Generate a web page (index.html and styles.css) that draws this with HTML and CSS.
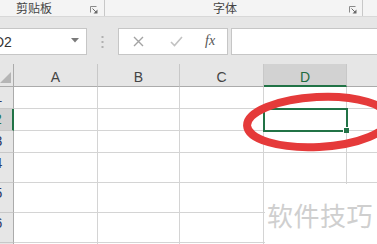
FILE: index.html
```html
<!DOCTYPE html>
<html lang="zh-CN">
<head>
<meta charset="utf-8">
<title>Sheet</title>
<link rel="stylesheet" href="styles.css">
</head>
<body>
<div class="page">
  <div class="ribbon">
    <div class="group g1">
      <span class="label">剪贴板</span>
      <svg class="launcher" width="8" height="8" viewBox="0 0 8 8"><path d="M0.5 6.5V0.5H6.5" fill="none" stroke="#8a8a8a" stroke-width="1"/><path d="M2.5 2.5L6 6" stroke="#6a6a6a" stroke-width="1"/><path d="M7.5 3.5V7.5H3.5Z" fill="#6a6a6a"/></svg>
    </div>
    <div class="group g2">
      <span class="label">字体</span>
      <svg class="launcher" width="8" height="8" viewBox="0 0 8 8"><path d="M0.5 6.5V0.5H6.5" fill="none" stroke="#8a8a8a" stroke-width="1"/><path d="M2.5 2.5L6 6" stroke="#6a6a6a" stroke-width="1"/><path d="M7.5 3.5V7.5H3.5Z" fill="#6a6a6a"/></svg>
    </div>
  </div>

  <div class="fbar">
    <div class="namebox">
      <span class="ref">D2</span>
      <svg class="caret" width="8" height="5" viewBox="0 0 8 5"><path d="M0 0H8L4 4.5Z" fill="#7a7a7a"/></svg>
    </div>
    <div class="grip">
      <svg width="3" height="13" viewBox="0 0 3 13"><rect x="0.5" y="0" width="2" height="2" fill="#b0b0b0"/><rect x="0.5" y="5" width="2" height="2" fill="#b0b0b0"/><rect x="0.5" y="10" width="2" height="2" fill="#b0b0b0"/></svg>
    </div>
    <div class="fbtns">
      <svg class="btn-x" width="11" height="11" viewBox="0 0 11 11"><path d="M1 1L10 10M10 1L1 10" stroke="#a3a3a3" stroke-width="1.4"/></svg>
      <svg class="btn-ok" width="13" height="11" viewBox="0 0 13 11"><path d="M1 6L4.5 9.5L12 1" fill="none" stroke="#c2c2c2" stroke-width="1.6"/></svg>
      <span class="fx">fx</span>
    </div>
    <div class="finput"></div>
  </div>

  <div class="sheet">
    <div class="corner"><svg width="11" height="11" viewBox="0 0 11 11"><path d="M11 0V11H0Z" fill="#b5b5b5"/></svg></div>
    <div class="ch">A</div>
    <div class="ch">B</div>
    <div class="ch">C</div>
    <div class="ch ch-sel">D</div>
    <div class="ch">E</div>

    <div class="rh">1</div><div class="c"></div><div class="c"></div><div class="c"></div><div class="c"></div><div class="c"></div>
    <div class="rh rh-sel">2</div><div class="c"></div><div class="c"></div><div class="c"></div><div class="c c-sel"></div><div class="c"></div>
    <div class="rh">3</div><div class="c"></div><div class="c"></div><div class="c"></div><div class="c"></div><div class="c"></div>
    <div class="rh">4</div><div class="c"></div><div class="c"></div><div class="c"></div><div class="c"></div><div class="c"></div>
    <div class="rh">5</div><div class="c"></div><div class="c"></div><div class="c"></div><div class="c"></div><div class="c"></div>
    <div class="rh">6</div><div class="c"></div><div class="c"></div><div class="c"></div><div class="c"></div><div class="c"></div>
    <div class="rh">7</div><div class="c"></div><div class="c"></div><div class="c"></div><div class="c"></div><div class="c"></div>
  </div>

  <svg class="mark" width="377" height="244" viewBox="0 0 377 244">
    <ellipse cx="318" cy="122" rx="71" ry="25" transform="rotate(-3 318 122)" fill="none" stroke="#e53a3a" stroke-width="8"/>
  </svg>
  <div class="watermark">软件技巧</div>
</div>
</body>
</html>
```

FILE: styles.css
```css
html, body {
  margin: 0;
  padding: 0;
  background: #ffffff;
}
.page {
  position: relative;
  width: 377px;
  height: 244px;
  overflow: hidden;
  font-family: "Noto Sans CJK SC", "Noto Sans", sans-serif;
  color: #444444;
}

/* ribbon group labels */
.ribbon {
  display: flex;
  height: 16px;
  background: #f4f4f4;
  border-bottom: 1px solid #d8d8d8;
}
.group {
  display: flex;
  align-items: center;
  box-sizing: border-box;
  height: 16px;
  border-right: 1px solid #c8c8c8;
}
.g1 { width: 105px; padding-left: 16px; }
.g2 { width: 258px; padding-left: 108px; }
.label {
  font-size: 12px;
  line-height: 16px;
  color: #444444;
}
.launcher {
  margin-left: auto;
  margin-top: 4px;
}
.g1 .launcher { margin-right: 6px; }
.g2 .launcher { margin-right: 5px; }

/* formula bar */
.fbar {
  display: flex;
  align-items: flex-start;
  height: 47px;
  box-sizing: border-box;
  padding-top: 11px;
  background: #e6e6e6;
}
.namebox {
  display: flex;
  align-items: center;
  box-sizing: border-box;
  width: 96px;
  height: 27px;
  margin-left: -9px;
  padding-left: 2px;
  background: #ffffff;
  border: 1px solid #c6c6c6;
}
.ref {
  font-family: "Liberation Sans", Arial, sans-serif;
  font-size: 14px;
  color: #333333;
}
.caret {
  margin-left: auto;
  margin-right: 7px;
  margin-top: -2px;
}
.grip {
  display: flex;
  justify-content: center;
  width: 31px;
  padding-top: 8px;
}
.fbtns {
  display: flex;
  align-items: center;
  box-sizing: border-box;
  width: 110px;
  height: 27px;
  background: #ffffff;
  border: 1px solid #c6c6c6;
  padding-left: 14px;
}
.btn-x { margin-right: 26px; }
.btn-ok { margin-right: 22px; }
.fx {
  font-family: "Liberation Serif", "Times New Roman", serif;
  font-style: italic;
  font-size: 14px;
  color: #555555;
  margin-top: -2px;
}
.finput {
  flex: 1;
  height: 27px;
  box-sizing: border-box;
  margin-left: 3px;
  margin-right: -5px;
  background: #ffffff;
  border: 1px solid #c6c6c6;
}

/* sheet grid */
.sheet {
  display: grid;
  grid-template-columns: 30px 84px 82px 84px 83px 83px;
  grid-template-rows: 23px 22px 22px 22px 30px 30px 30px 30px;
  margin-left: -16px;
}
.corner {
  display: flex;
  align-items: flex-end;
  justify-content: flex-end;
  box-sizing: border-box;
  padding: 0 2px 3px 0;
  background: #e6e6e6;
  border-right: 1px solid #ababab;
  border-bottom: 1px solid #ababab;
}
.ch {
  box-sizing: border-box;
  background: #e6e6e6;
  border-right: 1px solid #c8c8c8;
  border-bottom: 1px solid #ababab;
  font-family: "Liberation Sans", Arial, sans-serif;
  font-size: 14px;
  line-height: 18px;
  padding-top: 4px;
  text-align: center;
  color: #444444;
}
.ch-sel {
  background: #d2d2d2;
  color: #1f6b40;
  border-bottom: 2px solid #217346;
}
.rh {
  box-sizing: border-box;
  background: #e6e6e6;
  border-right: 1px solid #ababab;
  border-bottom: 1px solid #c8c8c8;
  font-family: "Liberation Sans", Arial, sans-serif;
  font-size: 14px;
  line-height: 20px;
  text-align: center;
  color: #2b3a66;
}
.rh-sel {
  background: #d2d2d2;
  border-right: 2px solid #217346;
  color: #217346;
}
.c {
  box-sizing: border-box;
  background: #ffffff;
  border-right: 1px solid #d4d4d4;
  border-bottom: 1px solid #d4d4d4;
}
.c-sel {
  position: relative;
  outline: 2px solid #217346;
  outline-offset: -1px;
}
.c-sel::after {
  content: "";
  position: absolute;
  right: -3px;
  bottom: -3px;
  width: 5px;
  height: 5px;
  background: #217346;
  border: 1px solid #ffffff;
  border-right: none;
  border-bottom: none;
}

/* overlays */
.mark {
  position: absolute;
  left: 0;
  top: 0;
  pointer-events: none;
}
.watermark {
  position: absolute;
  left: 265px;
  top: 184px;
  width: 112px;
  height: 60px;
  box-sizing: border-box;
  padding-left: 2px;
  display: flex;
  align-items: center;
  background: #ffffff;
  font-size: 26px;
  letter-spacing: 0.5px;
  color: #cfcfcf;
  white-space: nowrap;
}
```
